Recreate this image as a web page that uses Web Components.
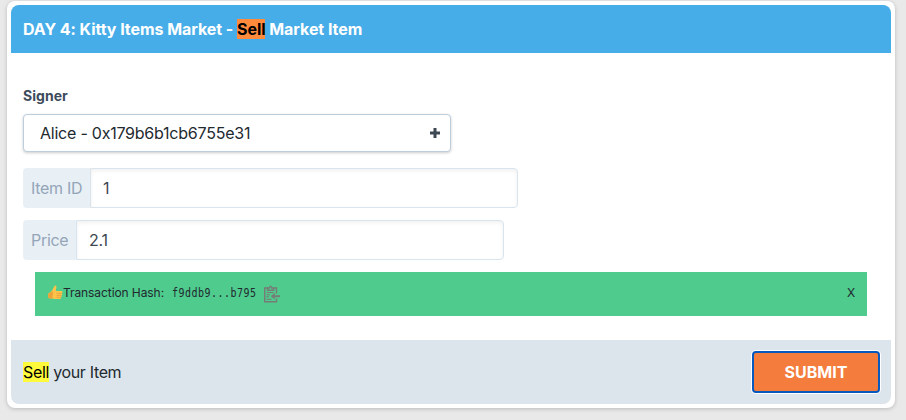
<!DOCTYPE html>
<html lang="en">
<head>
<meta charset="utf-8">
<title>Kitty Items Market</title>
<style>
html{height:100%;background:#e9e9e9;overflow:hidden}
body{margin:0;padding:1px 11px 12px 7px;font:16px/24px Inter,"Liberation Sans",sans-serif;color:#22292f}
mark{color:#000;background:#fffb3c}
mark.hot{background:#ff8a3c}
</style>
</head>
<body>
<action-card>
  <span slot="title">DAY 4: Kitty Items Market - <mark class="hot">Sell</mark> Market Item</span>
  <signer-select label="Signer">Alice - 0x179b6b1cb6755e31</signer-select>
  <input-group label="Item ID" style="--label-width:67px">1</input-group>
  <input-group label="Price" style="--label-width:53px">2.1</input-group>
  <transaction-notice>f9ddb9...b795</transaction-notice>
  <span slot="caption"><mark>Sell</mark> your Item</span>
  <submit-button slot="action">SUBMIT</submit-button>
</action-card>
<script>
function define(name, html) {
  const template = document.createElement('template');
  template.innerHTML = html;
  customElements.define(name, class extends HTMLElement {
    constructor() {
      super();
      this.attachShadow({mode: 'open'}).append(template.content.cloneNode(true));
    }
    connectedCallback() {
      const label = this.shadowRoot.querySelector('.label');
      if (label) label.textContent = this.getAttribute('label');
    }
  });
}

define('action-card', `<style>
:host{display:flex;flex-direction:column;box-sizing:border-box;height:407px;padding:4px;background:#fff;border-radius:8px;box-shadow:0 1px 4px rgba(0,0,0,.2)}
header{height:48px;box-sizing:border-box;padding:12px;background:#47ade8;color:#fff;font-weight:700;letter-spacing:-.055px;border-radius:8px 8px 0 0}
main{flex:1;box-sizing:border-box;padding:32px 12px 0}
footer{height:64px;box-sizing:border-box;padding:0 11px 0 12px;display:flex;align-items:center;justify-content:space-between;background:#dde5ec;border-radius:0 0 8px 8px}
slot[name=caption]{letter-spacing:-.34px}
</style><header><slot name="title"></slot></header><main><slot></slot></main><footer><slot name="caption"></slot><slot name="action"></slot></footer>`);

define('signer-select', `<style>
:host{display:block;width:428px}
.label{height:29px;font-size:14px;line-height:22px;font-weight:700;letter-spacing:.05px;color:#3d4b5c}
.box{display:flex;align-items:center;justify-content:space-between;box-sizing:border-box;height:38px;padding:0 10px 0 16px;border:1px solid #bccddc;border-radius:4px;background:#fff;box-shadow:0 1px 3px rgba(0,0,0,.2);letter-spacing:-.23px}
svg{display:block}
</style><div class="label"></div><div class="box"><slot></slot><svg width="10" height="10" viewBox="0 0 10 10"><path d="M3.5 0h3v3.5H10v3H6.5V10h-3V6.5H0v-3h3.5z" fill="#3d4852"/></svg></div>`);

define('input-group', `<style>
:host{display:flex;width:max-content;height:40px;margin-top:12px;letter-spacing:-.3px}
:host(:first-of-type){margin-top:16px}
.label{box-sizing:border-box;width:var(--label-width);padding:8px 0 0 8px;background:#e8f0f6;border-radius:4px 0 0 4px;color:#94a5b8;white-space:nowrap}
.field{box-sizing:border-box;width:428px;padding:7px 12px;border:1px solid #dae4ec;border-radius:0 4px 4px 0;background:#fff;color:#3d4852;box-shadow:inset 0 2px 4px rgba(0,0,0,.06)}
</style><div class="label"></div><div class="field"><slot></slot></div>`);

define('transaction-notice', `<style>
:host{display:flex;align-items:center;box-sizing:border-box;height:44px;margin:12px 12px 0;padding:0 12px 2px;background:#4ecb8d;font-size:12px;line-height:18px;letter-spacing:-.08px}
.hash{margin-left:8px;font:10px/18px "DejaVu Sans Mono","Liberation Mono",monospace;letter-spacing:.48px;transform:scaleY(1.18)}
.copy{margin-left:6px;margin-top:1px}
.close{margin-left:auto}
svg{display:block;flex:none}
</style>
<svg width="16" height="16" viewBox="-.5 0 16 16"><path d="M1 8.2C2.5 8 3.8 6.5 5 4.8L6.7 1.5Q8.3-.5 9 1.6L8.3 6h5.3c1.6 0 1.8 1.9.5 2.2 1.1.6.8 2-.3 2.1.8.7.4 1.8-.6 1.9.6.9 0 1.8-1.2 1.8H7.3c-1.8 0-3.6-.8-6-.7Q-.2 10.4 1 8.2z" fill="#ffc34b"/><path d="M1 8.2q2-.3 3.8-2.3l.9 1.8-1 6.1-3.4-.5Q-.2 10.4 1 8.2z" fill="#eba43b"/><path d="M9 8.3h5.1M9.1 10.4h4.7M8.9 12.3h4.3" fill="none" stroke="#d99235" stroke-width=".65"/></svg>
<span>Transaction Hash:</span><span class="hash"><slot></slot></span>
<svg class="copy" width="18" height="18" viewBox="0 0 18 18" fill="none" stroke="#777c77"><path d="M5.2 3H1.7V16.8h11.8V13.5M10.8 3h2.7v5.5" stroke-width="1.4"/><path d="M4.6 5.2V3h1.7Q7.5-.7 8.7 3h1.9v2.2z" stroke-width="1.4"/><path d="M3.5 7.5h7M3.5 9.7h3.5M3.5 11.7h2.5M3.5 14.2h5" stroke-width="1.1"/><path d="M17 11.2H10" stroke-width="2"/><path d="M11.8 7.8v6.8L7.8 11.2z" fill="#777c77" stroke="none"/></svg>
<span class="close">X</span>`);

define('submit-button', `<style>
:host{display:flex;align-items:center;justify-content:center;box-sizing:border-box;width:128px;height:42px;border:2px solid #0759bd;border-radius:4px;background:#f47c3c;color:#fff;font-weight:700;box-shadow:0 0 0 1px #fff}
</style><slot></slot>`);
</script>
</body>
</html>
